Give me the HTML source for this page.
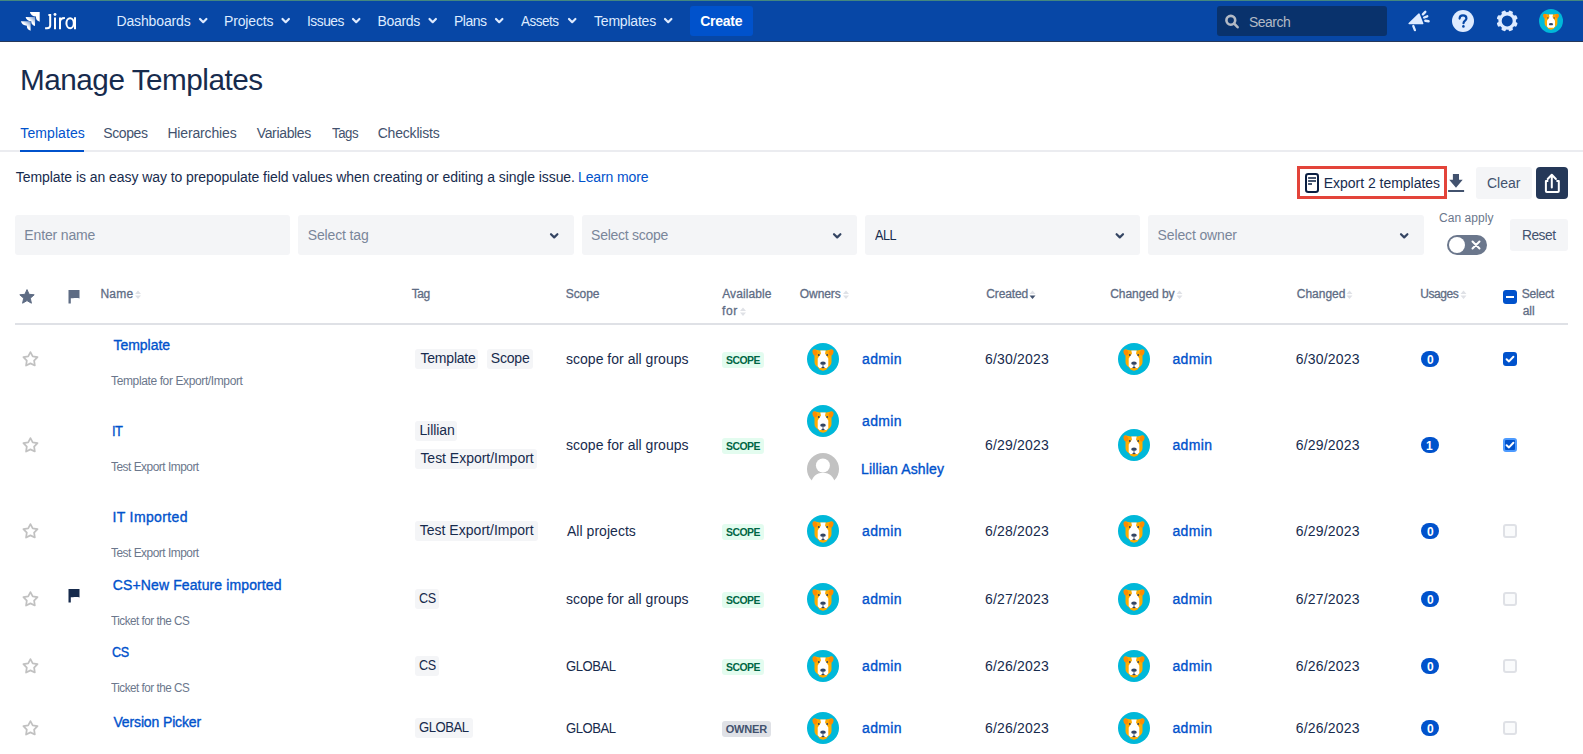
<!DOCTYPE html>
<html><head><meta charset="utf-8">
<style>
html,body{margin:0;padding:0;background:#fff;width:1583px;height:754px;overflow:hidden;position:relative;font-family:"Liberation Sans",sans-serif}
.t{position:absolute;white-space:nowrap;font-family:"Liberation Sans",sans-serif}
.a{position:absolute}
</style></head><body>
<!-- header -->
<div class="a" style="left:0;top:0;width:1583px;height:42px;background:#0747a6"></div>
<div class="a" style="left:0;top:0;width:1583px;height:1px;background:#44877f"></div>
<div class="a" style="left:0;top:41px;width:1583px;height:1px;background:#26385a"></div>
<!-- jira logo -->
<svg class="a" style="left:0;top:0" width="90" height="42" viewBox="0 0 90 42">
 <defs>
  <linearGradient id="jg1" x1="1" y1="0" x2="0.3" y2="0.8"><stop offset="0" stop-color="#fff" stop-opacity="0.35"/><stop offset="0.6" stop-color="#fff"/></linearGradient>
 </defs>
 <path d="M29.9,12.1 L39.7,12.1 L39.7,21.7 C37.6,21.3 36,19.6 36,17.6 L36,16.6 C32.8,16.6 30.4,14.8 29.9,12.1Z" fill="#fff"/>
 <path d="M25.6,17 L35.2,17 L35,26 C33,25.6 31.3,24 31.3,22 L31.3,21.2 C28.3,21.2 26.1,19.6 25.6,17Z" fill="url(#jg1)"/>
 <path d="M20.9,21.3 L30.7,21.3 L30.6,30.8 C28.5,30.3 26.9,28.6 26.9,26.6 L26.9,25.7 C23.8,25.7 21.4,24 20.9,21.3Z" fill="url(#jg1)"/>
 <g fill="none" stroke="#fff" stroke-width="2">
  <path d="M48.4,14.9 H50.2 V25.6 C50.2,27.5 49,28.3 47.1,28.3 H45.1"/>
  <path d="M55,17.5 V29.2"/>
  <path d="M60,17.5 V29.2 M60,22 C60,19.2 61.8,18.1 64.9,18.1"/>
  <ellipse cx="70.1" cy="23.2" rx="3.7" ry="5"/>
  <path d="M75,17.3 V29.2"/>
 </g>
 <circle cx="55" cy="14.5" r="1.45" fill="#fff"/>
</svg>
<!-- nav chevrons -->
<svg class="a" style="left:0;top:0" width="700" height="42">
 <g fill="none" stroke="#deebff" stroke-width="2.2" stroke-linecap="round" stroke-linejoin="round">
  <path d="M200 19 L203.2 22.2 L206.4 19"/>
  <path d="M282.5 19 L285.7 22.2 L288.9 19"/>
  <path d="M353 19 L356.2 22.2 L359.4 19"/>
  <path d="M429.5 19 L432.7 22.2 L435.9 19"/>
  <path d="M496 19 L499.2 22.2 L502.4 19"/>
  <path d="M569 19 L572.2 22.2 L575.4 19"/>
  <path d="M665 19 L668.2 22.2 L671.4 19"/>
 </g>
</svg>
<div class="a" style="left:690px;top:6px;width:63px;height:30px;background:#0052cc;border-radius:3px"></div>
<!-- search -->
<div class="a" style="left:1217px;top:6px;width:170px;height:30px;background:#09326c;border-radius:3px"></div>
<svg class="a" style="left:1222px;top:11.8px" width="20" height="20" viewBox="0 0 20 20">
 <circle cx="8.8" cy="8.3" r="4.4" fill="none" stroke="#b3bac5" stroke-width="2.6"/>
 <path d="M12.2 11.7 L15.6 15.2" stroke="#b3bac5" stroke-width="2.6" stroke-linecap="round"/>
</svg>
<!-- megaphone -->
<svg class="a" style="left:1404px;top:6px" width="30" height="30" viewBox="0 0 30 30">
 <path d="M5.2,17.5 L15,8.2 L18.6,17.5 Z" fill="#deebff" stroke="#deebff" stroke-width="1.6" stroke-linejoin="round"/>
 <path d="M9.3,20 L10.9,24.1" stroke="#deebff" stroke-width="2.3" stroke-linecap="round"/>
 <path d="M18.9,8.3 L21.3,5.8 M20.2,11.5 L23.2,10.3 M21.3,14.8 L24.6,15.3" stroke="#deebff" stroke-width="2.4" stroke-linecap="round"/>
</svg>
<!-- help -->
<svg class="a" style="left:1452px;top:10px" width="22" height="22" viewBox="0 0 22 22">
 <circle cx="11" cy="11" r="11" fill="#deebff"/>
 <path d="M7.6 8.6 C7.6 6.6 9.1 5.3 11 5.3 C13 5.3 14.4 6.6 14.4 8.4 C14.4 10.6 11.5 10.8 11.5 13.2" fill="none" stroke="#0747a6" stroke-width="2.2" stroke-linecap="round"/>
 <circle cx="11.4" cy="16.4" r="1.3" fill="#0747a6"/>
</svg>
<!-- gear -->
<svg class="a" style="left:1496px;top:10px" width="22" height="22" viewBox="0 0 22 22">
 <g fill="#deebff">
  <circle cx="11.2" cy="10.9" r="8.8"/>
  <rect x="9" y="0.3" width="4.4" height="5" rx="1.2" transform="rotate(22.5 11.2 10.9)"/><rect x="9" y="0.3" width="4.4" height="5" rx="1.2" transform="rotate(67.5 11.2 10.9)"/><rect x="9" y="0.3" width="4.4" height="5" rx="1.2" transform="rotate(112.5 11.2 10.9)"/><rect x="9" y="0.3" width="4.4" height="5" rx="1.2" transform="rotate(157.5 11.2 10.9)"/><rect x="9" y="0.3" width="4.4" height="5" rx="1.2" transform="rotate(202.5 11.2 10.9)"/><rect x="9" y="0.3" width="4.4" height="5" rx="1.2" transform="rotate(247.5 11.2 10.9)"/><rect x="9" y="0.3" width="4.4" height="5" rx="1.2" transform="rotate(292.5 11.2 10.9)"/><rect x="9" y="0.3" width="4.4" height="5" rx="1.2" transform="rotate(337.5 11.2 10.9)"/>
 </g>
 <circle cx="11.2" cy="10.9" r="5.5" fill="#0747a6"/>
</svg>
<!-- header avatar -->
<svg class="a" style="left:1539px;top:9px" width="24" height="24" viewBox="0 0 32 32">
<circle cx="16" cy="16" r="16" fill="#00b8d9"/>
<path d="M6,8 C6,6.8 7.5,6.4 9,6.7 L13,7.4 L19,7.4 L23,6.7 C24.5,6.4 26,6.8 26,8 L25.4,11 L24.5,12.5 L24.5,19 C24.5,21 23.3,22.8 21.6,23.8 L19.2,26.8 C17.5,27.6 14.5,27.6 12.8,26.8 L10.4,23.8 C8.7,22.8 7.5,21 7.5,19 L7.5,12.5 L6.6,11Z" fill="#ffab00"/>
<ellipse cx="7.9" cy="9.4" rx="2.3" ry="3" transform="rotate(-20 7.9 9.4)" fill="#ff8b00"/><ellipse cx="24.1" cy="9.4" rx="2.3" ry="3" transform="rotate(20 24.1 9.4)" fill="#ff8b00"/>
<path d="M13.3,7.4 L18.7,7.4 L18,10.6 L21.3,15.6 L21.3,23.3 L19.4,25.2 L12.6,25.2 L10.7,23.3 L10.7,15.6 L14,10.6Z" fill="#fff"/>
<circle cx="11.8" cy="12" r="0.95" fill="#344563"/><circle cx="20.2" cy="12" r="0.95" fill="#344563"/>
<ellipse cx="16" cy="20.2" rx="2.8" ry="1.6" fill="#344563"/>
<path d="M12.6,25 L19.4,25 L17.6,27 C16.6,27.5 15.4,27.5 14.4,27Z" fill="#ffab00"/>
</svg>

<!-- tabs border -->
<div class="a" style="left:0;top:150px;width:1583px;height:2px;background:#ebecf0"></div>
<div class="a" style="left:20px;top:150px;width:64px;height:2px;background:#0052cc"></div>

<!-- export bar -->
<div class="a" style="left:1297px;top:166px;width:144px;height:27px;border:3px solid #e3443a"></div>
<svg class="a" style="left:1304px;top:172px" width="16" height="22" viewBox="0 0 16 22">
 <rect x="2" y="2.1" width="12" height="18" rx="2.3" fill="none" stroke="#091e42" stroke-width="2"/>
 <path d="M4.1,5.9 H12 M4.1,8.9 H12 M4.1,11.9 H8" stroke="#091e42" stroke-width="1.5"/>
</svg>
<svg class="a" style="left:1447px;top:172px" width="18" height="22" viewBox="0 0 18 22">
 <path d="M5.9,2 H12 V7.8 H15.7 L9,15.8 L2.2,7.8 H5.9Z" fill="#42526e"/>
 <rect x="1.1" y="18" width="16" height="2" fill="#42526e"/>
</svg>
<div class="a" style="left:1476px;top:167px;width:56px;height:32px;background:#f4f5f7;border-radius:3px"></div>
<div class="a" style="left:1536px;top:167px;width:32px;height:32px;background:#253858;border-radius:4px"></div>
<svg class="a" style="left:1536px;top:167px" width="32" height="32" viewBox="0 0 32 32">
 <path d="M12.3,14 H9.9 V24.1 C9.9,24.6 10.3,25 10.8,25 H21.9 C22.4,25 22.8,24.6 22.8,24.1 V14 H20.4" fill="none" stroke="#fff" stroke-width="2" stroke-linejoin="round"/>
 <path d="M15.8,20.5 V8 M11.7,12 L15.8,7.8 L19.9,12" fill="none" stroke="#fff" stroke-width="2" stroke-linecap="round" stroke-linejoin="round"/>
</svg>
<!-- filters -->
<div class="a" style="left:15px;top:215px;width:275px;height:40px;background:#f4f5f7;border-radius:3px"></div>
<div class="a" style="left:298px;top:215px;width:276px;height:40px;background:#f4f5f7;border-radius:3px"></div>
<div class="a" style="left:582px;top:215px;width:275px;height:40px;background:#f4f5f7;border-radius:3px"></div>
<div class="a" style="left:865px;top:215px;width:275px;height:40px;background:#f4f5f7;border-radius:3px"></div>
<div class="a" style="left:1148px;top:215px;width:276px;height:40px;background:#f4f5f7;border-radius:3px"></div>
<svg class="a" style="left:0;top:200px" width="1583" height="60">
 <g fill="none" stroke="#344563" stroke-width="2.2" stroke-linecap="round" stroke-linejoin="round">
  <path d="M551 34.2 L554.2 37.4 L557.4 34.2"/>
  <path d="M834 34.2 L837.2 37.4 L840.4 34.2"/>
  <path d="M1116.6 34.2 L1119.8 37.4 L1123 34.2"/>
  <path d="M1401 34.2 L1404.2 37.4 L1407.4 34.2"/>
 </g>
</svg>
<!-- toggle -->
<div class="a" style="left:1447px;top:235px;width:40px;height:20px;background:#6b778c;border-radius:10px"></div>
<div class="a" style="left:1449px;top:237px;width:16px;height:16px;background:#fff;border-radius:8px"></div>
<svg class="a" style="left:1470px;top:239px" width="12" height="12" viewBox="0 0 12 12">
 <path d="M2.5 2.5 L9.5 9.5 M9.5 2.5 L2.5 9.5" stroke="#fff" stroke-width="2" stroke-linecap="round"/>
</svg>
<div class="a" style="left:1510px;top:219px;width:58px;height:32px;background:#f4f5f7;border-radius:3px"></div>

<!-- table header -->
<svg class="a" style="left:18px;top:288px" width="18" height="18" viewBox="0 0 18 18">
 <path d="M9 1.6 L11.1 6.3 L16.2 6.8 L12.3 10.2 L13.4 15.2 L9 12.6 L4.6 15.2 L5.7 10.2 L1.8 6.8 L6.9 6.3Z" fill="#5e6c84" stroke="#5e6c84" stroke-width="1" stroke-linejoin="round"/>
</svg>
<svg class="a" style="left:67.6px;top:289.2px" width="12" height="15" viewBox="0 0 12 15">
 <path d="M0.5 1 L11.5 1 L11.5 9.5 C9 8.5 6 9.5 3.5 9.2 L2.8 9.2 L2.8 14.5 L0.5 14.5Z" fill="#5e6c84"/>
</svg>
<svg class="a" style="left:0;top:280px" width="1583" height="40">
 <g fill="#dfe1e6">
  <path d="M135 14 L138 10.5 L141 14Z M135 15.5 L138 19 L141 15.5Z"/>
  <path d="M740 31 L743 27.5 L746 31Z M740 32.5 L743 36 L746 32.5Z"/>
  <path d="M843 14 L846 10.5 L849 14Z M843 15.5 L846 19 L849 15.5Z"/>
  <path d="M1029.5 14 L1032.5 10.5 L1035.5 14Z"/>
  <path d="M1176.5 14 L1179.5 10.5 L1182.5 14Z M1176.5 15.5 L1179.5 19 L1182.5 15.5Z"/>
  <path d="M1346.5 14 L1349.5 10.5 L1352.5 14Z M1346.5 15.5 L1349.5 19 L1352.5 15.5Z"/>
  <path d="M1460.5 14 L1463.5 10.5 L1466.5 14Z M1460.5 15.5 L1463.5 19 L1466.5 15.5Z"/>
 </g>
 <path d="M1029.5 15.5 L1032.5 19 L1035.5 15.5Z" fill="#42526e"/>
</svg>
<div class="a" style="left:1503px;top:290px;width:14px;height:14px;background:#0052cc;border-radius:3px"></div>
<div class="a" style="left:1506px;top:296px;width:8px;height:2px;background:#fff"></div>
<div class="a" style="left:15px;top:323px;width:1553px;height:2px;background:#dfe1e6"></div>

<div style="position:absolute;left:415px;top:349px;width:63px;height:20px;background:#f4f5f7;border-radius:3px"></div>
<div style="position:absolute;left:487px;top:349px;width:46px;height:20px;background:#f4f5f7;border-radius:3px"></div>
<div style="position:absolute;left:722px;top:352px;width:42px;height:16px;background:#e3fcef;border-radius:3px"></div>
<svg style="position:absolute;left:807px;top:343px" width="32" height="32" viewBox="0 0 32 32"><circle cx="16" cy="16" r="16" fill="#00b8d9"/><path d="M6,8 C6,6.8 7.5,6.4 9,6.7 L13,7.4 L19,7.4 L23,6.7 C24.5,6.4 26,6.8 26,8 L25.4,11 L24.5,12.5 L24.5,19 C24.5,21 23.3,22.8 21.6,23.8 L19.2,26.8 C17.5,27.6 14.5,27.6 12.8,26.8 L10.4,23.8 C8.7,22.8 7.5,21 7.5,19 L7.5,12.5 L6.6,11Z" fill="#ffab00"/><ellipse cx="7.9" cy="9.4" rx="2.3" ry="3" transform="rotate(-20 7.9 9.4)" fill="#ff8b00"/><ellipse cx="24.1" cy="9.4" rx="2.3" ry="3" transform="rotate(20 24.1 9.4)" fill="#ff8b00"/><path d="M13.3,7.4 L18.7,7.4 L18,10.6 L21.3,15.6 L21.3,23.3 L19.4,25.2 L12.6,25.2 L10.7,23.3 L10.7,15.6 L14,10.6Z" fill="#fff"/><circle cx="11.8" cy="12" r="0.95" fill="#344563"/><circle cx="20.2" cy="12" r="0.95" fill="#344563"/><ellipse cx="16" cy="20.2" rx="2.8" ry="1.6" fill="#344563"/><path d="M12.6,25 L19.4,25 L17.6,27 C16.6,27.5 15.4,27.5 14.4,27Z" fill="#ffab00"/><path d="M15.6,21.3 H16.4 V24 H15.6Z" fill="#344563"/><ellipse cx="16" cy="24.5" rx="1.7" ry="0.7" fill="#344563"/></svg>
<svg style="position:absolute;left:1118px;top:343px" width="32" height="32" viewBox="0 0 32 32"><circle cx="16" cy="16" r="16" fill="#00b8d9"/><path d="M6,8 C6,6.8 7.5,6.4 9,6.7 L13,7.4 L19,7.4 L23,6.7 C24.5,6.4 26,6.8 26,8 L25.4,11 L24.5,12.5 L24.5,19 C24.5,21 23.3,22.8 21.6,23.8 L19.2,26.8 C17.5,27.6 14.5,27.6 12.8,26.8 L10.4,23.8 C8.7,22.8 7.5,21 7.5,19 L7.5,12.5 L6.6,11Z" fill="#ffab00"/><ellipse cx="7.9" cy="9.4" rx="2.3" ry="3" transform="rotate(-20 7.9 9.4)" fill="#ff8b00"/><ellipse cx="24.1" cy="9.4" rx="2.3" ry="3" transform="rotate(20 24.1 9.4)" fill="#ff8b00"/><path d="M13.3,7.4 L18.7,7.4 L18,10.6 L21.3,15.6 L21.3,23.3 L19.4,25.2 L12.6,25.2 L10.7,23.3 L10.7,15.6 L14,10.6Z" fill="#fff"/><circle cx="11.8" cy="12" r="0.95" fill="#344563"/><circle cx="20.2" cy="12" r="0.95" fill="#344563"/><ellipse cx="16" cy="20.2" rx="2.8" ry="1.6" fill="#344563"/><path d="M12.6,25 L19.4,25 L17.6,27 C16.6,27.5 15.4,27.5 14.4,27Z" fill="#ffab00"/><path d="M15.6,21.3 H16.4 V24 H15.6Z" fill="#344563"/><ellipse cx="16" cy="24.5" rx="1.7" ry="0.7" fill="#344563"/></svg>
<div style="position:absolute;left:1421px;top:351px;width:18px;height:16px;background:#0052cc;border-radius:8px"></div>
<div style="position:absolute;left:1503px;top:352px;width:10px;height:10px;border:2px solid #0052cc;background:#0052cc;border-radius:3px"></div><svg style="position:absolute;left:1503px;top:352px" width="14" height="14" viewBox="0 0 14 14"><path d="M3.6 7.2 L6 9.4 L10.4 4.8" fill="none" stroke="#fff" stroke-width="2" stroke-linecap="round" stroke-linejoin="round"/></svg>
<svg style="position:absolute;left:21.5px;top:350.2px" width="17" height="17" viewBox="0 0 17 17"><path d="M8.45 2.10 L10.71 6.39 L15.49 7.21 L12.11 10.69 L12.80 15.49 L8.45 13.35 L4.10 15.49 L4.79 10.69 L1.41 7.21 L6.19 6.39Z" fill="none" stroke="#c1c1c1" stroke-width="1.75" stroke-linejoin="round"/></svg>
<div style="position:absolute;left:415px;top:421px;width:42px;height:20px;background:#f4f5f7;border-radius:3px"></div>
<div style="position:absolute;left:415px;top:449px;width:122px;height:20px;background:#f4f5f7;border-radius:3px"></div>
<div style="position:absolute;left:722px;top:438px;width:42px;height:16px;background:#e3fcef;border-radius:3px"></div>
<svg style="position:absolute;left:807px;top:405px" width="32" height="32" viewBox="0 0 32 32"><circle cx="16" cy="16" r="16" fill="#00b8d9"/><path d="M6,8 C6,6.8 7.5,6.4 9,6.7 L13,7.4 L19,7.4 L23,6.7 C24.5,6.4 26,6.8 26,8 L25.4,11 L24.5,12.5 L24.5,19 C24.5,21 23.3,22.8 21.6,23.8 L19.2,26.8 C17.5,27.6 14.5,27.6 12.8,26.8 L10.4,23.8 C8.7,22.8 7.5,21 7.5,19 L7.5,12.5 L6.6,11Z" fill="#ffab00"/><ellipse cx="7.9" cy="9.4" rx="2.3" ry="3" transform="rotate(-20 7.9 9.4)" fill="#ff8b00"/><ellipse cx="24.1" cy="9.4" rx="2.3" ry="3" transform="rotate(20 24.1 9.4)" fill="#ff8b00"/><path d="M13.3,7.4 L18.7,7.4 L18,10.6 L21.3,15.6 L21.3,23.3 L19.4,25.2 L12.6,25.2 L10.7,23.3 L10.7,15.6 L14,10.6Z" fill="#fff"/><circle cx="11.8" cy="12" r="0.95" fill="#344563"/><circle cx="20.2" cy="12" r="0.95" fill="#344563"/><ellipse cx="16" cy="20.2" rx="2.8" ry="1.6" fill="#344563"/><path d="M12.6,25 L19.4,25 L17.6,27 C16.6,27.5 15.4,27.5 14.4,27Z" fill="#ffab00"/><path d="M15.6,21.3 H16.4 V24 H15.6Z" fill="#344563"/><ellipse cx="16" cy="24.5" rx="1.7" ry="0.7" fill="#344563"/></svg>
<svg style="position:absolute;left:807px;top:453px" width="32" height="32" viewBox="0 0 32 32"><circle cx="16" cy="16" r="16" fill="#c2c2c2"/><circle cx="15.9" cy="12.5" r="7" fill="#fff"/><path d="M3.5,33 C4.5,24 9,19.8 16,19.8 C23,19.8 27.5,24 28.5,33Z" fill="#fff"/></svg>
<svg style="position:absolute;left:1118px;top:429px" width="32" height="32" viewBox="0 0 32 32"><circle cx="16" cy="16" r="16" fill="#00b8d9"/><path d="M6,8 C6,6.8 7.5,6.4 9,6.7 L13,7.4 L19,7.4 L23,6.7 C24.5,6.4 26,6.8 26,8 L25.4,11 L24.5,12.5 L24.5,19 C24.5,21 23.3,22.8 21.6,23.8 L19.2,26.8 C17.5,27.6 14.5,27.6 12.8,26.8 L10.4,23.8 C8.7,22.8 7.5,21 7.5,19 L7.5,12.5 L6.6,11Z" fill="#ffab00"/><ellipse cx="7.9" cy="9.4" rx="2.3" ry="3" transform="rotate(-20 7.9 9.4)" fill="#ff8b00"/><ellipse cx="24.1" cy="9.4" rx="2.3" ry="3" transform="rotate(20 24.1 9.4)" fill="#ff8b00"/><path d="M13.3,7.4 L18.7,7.4 L18,10.6 L21.3,15.6 L21.3,23.3 L19.4,25.2 L12.6,25.2 L10.7,23.3 L10.7,15.6 L14,10.6Z" fill="#fff"/><circle cx="11.8" cy="12" r="0.95" fill="#344563"/><circle cx="20.2" cy="12" r="0.95" fill="#344563"/><ellipse cx="16" cy="20.2" rx="2.8" ry="1.6" fill="#344563"/><path d="M12.6,25 L19.4,25 L17.6,27 C16.6,27.5 15.4,27.5 14.4,27Z" fill="#ffab00"/><path d="M15.6,21.3 H16.4 V24 H15.6Z" fill="#344563"/><ellipse cx="16" cy="24.5" rx="1.7" ry="0.7" fill="#344563"/></svg>
<div style="position:absolute;left:1421px;top:437px;width:18px;height:16px;background:#0052cc;border-radius:8px"></div>
<div style="position:absolute;left:1503px;top:438px;width:10px;height:10px;border:2px solid #4c9aff;background:#0052cc;border-radius:3px"></div><svg style="position:absolute;left:1503px;top:438px" width="14" height="14" viewBox="0 0 14 14"><path d="M3.6 7.2 L6 9.4 L10.4 4.8" fill="none" stroke="#fff" stroke-width="2" stroke-linecap="round" stroke-linejoin="round"/></svg>
<svg style="position:absolute;left:21.5px;top:436.2px" width="17" height="17" viewBox="0 0 17 17"><path d="M8.45 2.10 L10.71 6.39 L15.49 7.21 L12.11 10.69 L12.80 15.49 L8.45 13.35 L4.10 15.49 L4.79 10.69 L1.41 7.21 L6.19 6.39Z" fill="none" stroke="#c1c1c1" stroke-width="1.75" stroke-linejoin="round"/></svg>
<div style="position:absolute;left:415px;top:521px;width:123px;height:20px;background:#f4f5f7;border-radius:3px"></div>
<div style="position:absolute;left:722px;top:524px;width:42px;height:16px;background:#e3fcef;border-radius:3px"></div>
<svg style="position:absolute;left:807px;top:515px" width="32" height="32" viewBox="0 0 32 32"><circle cx="16" cy="16" r="16" fill="#00b8d9"/><path d="M6,8 C6,6.8 7.5,6.4 9,6.7 L13,7.4 L19,7.4 L23,6.7 C24.5,6.4 26,6.8 26,8 L25.4,11 L24.5,12.5 L24.5,19 C24.5,21 23.3,22.8 21.6,23.8 L19.2,26.8 C17.5,27.6 14.5,27.6 12.8,26.8 L10.4,23.8 C8.7,22.8 7.5,21 7.5,19 L7.5,12.5 L6.6,11Z" fill="#ffab00"/><ellipse cx="7.9" cy="9.4" rx="2.3" ry="3" transform="rotate(-20 7.9 9.4)" fill="#ff8b00"/><ellipse cx="24.1" cy="9.4" rx="2.3" ry="3" transform="rotate(20 24.1 9.4)" fill="#ff8b00"/><path d="M13.3,7.4 L18.7,7.4 L18,10.6 L21.3,15.6 L21.3,23.3 L19.4,25.2 L12.6,25.2 L10.7,23.3 L10.7,15.6 L14,10.6Z" fill="#fff"/><circle cx="11.8" cy="12" r="0.95" fill="#344563"/><circle cx="20.2" cy="12" r="0.95" fill="#344563"/><ellipse cx="16" cy="20.2" rx="2.8" ry="1.6" fill="#344563"/><path d="M12.6,25 L19.4,25 L17.6,27 C16.6,27.5 15.4,27.5 14.4,27Z" fill="#ffab00"/><path d="M15.6,21.3 H16.4 V24 H15.6Z" fill="#344563"/><ellipse cx="16" cy="24.5" rx="1.7" ry="0.7" fill="#344563"/></svg>
<svg style="position:absolute;left:1118px;top:515px" width="32" height="32" viewBox="0 0 32 32"><circle cx="16" cy="16" r="16" fill="#00b8d9"/><path d="M6,8 C6,6.8 7.5,6.4 9,6.7 L13,7.4 L19,7.4 L23,6.7 C24.5,6.4 26,6.8 26,8 L25.4,11 L24.5,12.5 L24.5,19 C24.5,21 23.3,22.8 21.6,23.8 L19.2,26.8 C17.5,27.6 14.5,27.6 12.8,26.8 L10.4,23.8 C8.7,22.8 7.5,21 7.5,19 L7.5,12.5 L6.6,11Z" fill="#ffab00"/><ellipse cx="7.9" cy="9.4" rx="2.3" ry="3" transform="rotate(-20 7.9 9.4)" fill="#ff8b00"/><ellipse cx="24.1" cy="9.4" rx="2.3" ry="3" transform="rotate(20 24.1 9.4)" fill="#ff8b00"/><path d="M13.3,7.4 L18.7,7.4 L18,10.6 L21.3,15.6 L21.3,23.3 L19.4,25.2 L12.6,25.2 L10.7,23.3 L10.7,15.6 L14,10.6Z" fill="#fff"/><circle cx="11.8" cy="12" r="0.95" fill="#344563"/><circle cx="20.2" cy="12" r="0.95" fill="#344563"/><ellipse cx="16" cy="20.2" rx="2.8" ry="1.6" fill="#344563"/><path d="M12.6,25 L19.4,25 L17.6,27 C16.6,27.5 15.4,27.5 14.4,27Z" fill="#ffab00"/><path d="M15.6,21.3 H16.4 V24 H15.6Z" fill="#344563"/><ellipse cx="16" cy="24.5" rx="1.7" ry="0.7" fill="#344563"/></svg>
<div style="position:absolute;left:1421px;top:523px;width:18px;height:16px;background:#0052cc;border-radius:8px"></div>
<div style="position:absolute;left:1503px;top:524px;width:10px;height:10px;border:2px solid #dfe1e6;background:#fafbfc;border-radius:3px"></div>
<svg style="position:absolute;left:21.5px;top:522.2px" width="17" height="17" viewBox="0 0 17 17"><path d="M8.45 2.10 L10.71 6.39 L15.49 7.21 L12.11 10.69 L12.80 15.49 L8.45 13.35 L4.10 15.49 L4.79 10.69 L1.41 7.21 L6.19 6.39Z" fill="none" stroke="#c1c1c1" stroke-width="1.75" stroke-linejoin="round"/></svg>
<div style="position:absolute;left:415px;top:589px;width:24px;height:20px;background:#f4f5f7;border-radius:3px"></div>
<div style="position:absolute;left:722px;top:592px;width:42px;height:16px;background:#e3fcef;border-radius:3px"></div>
<svg style="position:absolute;left:807px;top:583px" width="32" height="32" viewBox="0 0 32 32"><circle cx="16" cy="16" r="16" fill="#00b8d9"/><path d="M6,8 C6,6.8 7.5,6.4 9,6.7 L13,7.4 L19,7.4 L23,6.7 C24.5,6.4 26,6.8 26,8 L25.4,11 L24.5,12.5 L24.5,19 C24.5,21 23.3,22.8 21.6,23.8 L19.2,26.8 C17.5,27.6 14.5,27.6 12.8,26.8 L10.4,23.8 C8.7,22.8 7.5,21 7.5,19 L7.5,12.5 L6.6,11Z" fill="#ffab00"/><ellipse cx="7.9" cy="9.4" rx="2.3" ry="3" transform="rotate(-20 7.9 9.4)" fill="#ff8b00"/><ellipse cx="24.1" cy="9.4" rx="2.3" ry="3" transform="rotate(20 24.1 9.4)" fill="#ff8b00"/><path d="M13.3,7.4 L18.7,7.4 L18,10.6 L21.3,15.6 L21.3,23.3 L19.4,25.2 L12.6,25.2 L10.7,23.3 L10.7,15.6 L14,10.6Z" fill="#fff"/><circle cx="11.8" cy="12" r="0.95" fill="#344563"/><circle cx="20.2" cy="12" r="0.95" fill="#344563"/><ellipse cx="16" cy="20.2" rx="2.8" ry="1.6" fill="#344563"/><path d="M12.6,25 L19.4,25 L17.6,27 C16.6,27.5 15.4,27.5 14.4,27Z" fill="#ffab00"/><path d="M15.6,21.3 H16.4 V24 H15.6Z" fill="#344563"/><ellipse cx="16" cy="24.5" rx="1.7" ry="0.7" fill="#344563"/></svg>
<svg style="position:absolute;left:1118px;top:583px" width="32" height="32" viewBox="0 0 32 32"><circle cx="16" cy="16" r="16" fill="#00b8d9"/><path d="M6,8 C6,6.8 7.5,6.4 9,6.7 L13,7.4 L19,7.4 L23,6.7 C24.5,6.4 26,6.8 26,8 L25.4,11 L24.5,12.5 L24.5,19 C24.5,21 23.3,22.8 21.6,23.8 L19.2,26.8 C17.5,27.6 14.5,27.6 12.8,26.8 L10.4,23.8 C8.7,22.8 7.5,21 7.5,19 L7.5,12.5 L6.6,11Z" fill="#ffab00"/><ellipse cx="7.9" cy="9.4" rx="2.3" ry="3" transform="rotate(-20 7.9 9.4)" fill="#ff8b00"/><ellipse cx="24.1" cy="9.4" rx="2.3" ry="3" transform="rotate(20 24.1 9.4)" fill="#ff8b00"/><path d="M13.3,7.4 L18.7,7.4 L18,10.6 L21.3,15.6 L21.3,23.3 L19.4,25.2 L12.6,25.2 L10.7,23.3 L10.7,15.6 L14,10.6Z" fill="#fff"/><circle cx="11.8" cy="12" r="0.95" fill="#344563"/><circle cx="20.2" cy="12" r="0.95" fill="#344563"/><ellipse cx="16" cy="20.2" rx="2.8" ry="1.6" fill="#344563"/><path d="M12.6,25 L19.4,25 L17.6,27 C16.6,27.5 15.4,27.5 14.4,27Z" fill="#ffab00"/><path d="M15.6,21.3 H16.4 V24 H15.6Z" fill="#344563"/><ellipse cx="16" cy="24.5" rx="1.7" ry="0.7" fill="#344563"/></svg>
<div style="position:absolute;left:1421px;top:591px;width:18px;height:16px;background:#0052cc;border-radius:8px"></div>
<div style="position:absolute;left:1503px;top:592px;width:10px;height:10px;border:2px solid #dfe1e6;background:#fafbfc;border-radius:3px"></div>
<svg style="position:absolute;left:21.5px;top:590.2px" width="17" height="17" viewBox="0 0 17 17"><path d="M8.45 2.10 L10.71 6.39 L15.49 7.21 L12.11 10.69 L12.80 15.49 L8.45 13.35 L4.10 15.49 L4.79 10.69 L1.41 7.21 L6.19 6.39Z" fill="none" stroke="#c1c1c1" stroke-width="1.75" stroke-linejoin="round"/></svg>
<svg style="position:absolute;left:67.6px;top:588.4px" width="12" height="15" viewBox="0 0 12 15"><path d="M0.5 1 L11.5 1 L11.5 9.5 C9 8.5 6 9.5 3.5 9.2 L2.8 9.2 L2.8 14.5 L0.5 14.5Z" fill="#172b4d"/></svg>
<div style="position:absolute;left:415px;top:656px;width:24px;height:20px;background:#f4f5f7;border-radius:3px"></div>
<div style="position:absolute;left:722px;top:659px;width:42px;height:16px;background:#e3fcef;border-radius:3px"></div>
<svg style="position:absolute;left:807px;top:650px" width="32" height="32" viewBox="0 0 32 32"><circle cx="16" cy="16" r="16" fill="#00b8d9"/><path d="M6,8 C6,6.8 7.5,6.4 9,6.7 L13,7.4 L19,7.4 L23,6.7 C24.5,6.4 26,6.8 26,8 L25.4,11 L24.5,12.5 L24.5,19 C24.5,21 23.3,22.8 21.6,23.8 L19.2,26.8 C17.5,27.6 14.5,27.6 12.8,26.8 L10.4,23.8 C8.7,22.8 7.5,21 7.5,19 L7.5,12.5 L6.6,11Z" fill="#ffab00"/><ellipse cx="7.9" cy="9.4" rx="2.3" ry="3" transform="rotate(-20 7.9 9.4)" fill="#ff8b00"/><ellipse cx="24.1" cy="9.4" rx="2.3" ry="3" transform="rotate(20 24.1 9.4)" fill="#ff8b00"/><path d="M13.3,7.4 L18.7,7.4 L18,10.6 L21.3,15.6 L21.3,23.3 L19.4,25.2 L12.6,25.2 L10.7,23.3 L10.7,15.6 L14,10.6Z" fill="#fff"/><circle cx="11.8" cy="12" r="0.95" fill="#344563"/><circle cx="20.2" cy="12" r="0.95" fill="#344563"/><ellipse cx="16" cy="20.2" rx="2.8" ry="1.6" fill="#344563"/><path d="M12.6,25 L19.4,25 L17.6,27 C16.6,27.5 15.4,27.5 14.4,27Z" fill="#ffab00"/><path d="M15.6,21.3 H16.4 V24 H15.6Z" fill="#344563"/><ellipse cx="16" cy="24.5" rx="1.7" ry="0.7" fill="#344563"/></svg>
<svg style="position:absolute;left:1118px;top:650px" width="32" height="32" viewBox="0 0 32 32"><circle cx="16" cy="16" r="16" fill="#00b8d9"/><path d="M6,8 C6,6.8 7.5,6.4 9,6.7 L13,7.4 L19,7.4 L23,6.7 C24.5,6.4 26,6.8 26,8 L25.4,11 L24.5,12.5 L24.5,19 C24.5,21 23.3,22.8 21.6,23.8 L19.2,26.8 C17.5,27.6 14.5,27.6 12.8,26.8 L10.4,23.8 C8.7,22.8 7.5,21 7.5,19 L7.5,12.5 L6.6,11Z" fill="#ffab00"/><ellipse cx="7.9" cy="9.4" rx="2.3" ry="3" transform="rotate(-20 7.9 9.4)" fill="#ff8b00"/><ellipse cx="24.1" cy="9.4" rx="2.3" ry="3" transform="rotate(20 24.1 9.4)" fill="#ff8b00"/><path d="M13.3,7.4 L18.7,7.4 L18,10.6 L21.3,15.6 L21.3,23.3 L19.4,25.2 L12.6,25.2 L10.7,23.3 L10.7,15.6 L14,10.6Z" fill="#fff"/><circle cx="11.8" cy="12" r="0.95" fill="#344563"/><circle cx="20.2" cy="12" r="0.95" fill="#344563"/><ellipse cx="16" cy="20.2" rx="2.8" ry="1.6" fill="#344563"/><path d="M12.6,25 L19.4,25 L17.6,27 C16.6,27.5 15.4,27.5 14.4,27Z" fill="#ffab00"/><path d="M15.6,21.3 H16.4 V24 H15.6Z" fill="#344563"/><ellipse cx="16" cy="24.5" rx="1.7" ry="0.7" fill="#344563"/></svg>
<div style="position:absolute;left:1421px;top:658px;width:18px;height:16px;background:#0052cc;border-radius:8px"></div>
<div style="position:absolute;left:1503px;top:659px;width:10px;height:10px;border:2px solid #dfe1e6;background:#fafbfc;border-radius:3px"></div>
<svg style="position:absolute;left:21.5px;top:657.2px" width="17" height="17" viewBox="0 0 17 17"><path d="M8.45 2.10 L10.71 6.39 L15.49 7.21 L12.11 10.69 L12.80 15.49 L8.45 13.35 L4.10 15.49 L4.79 10.69 L1.41 7.21 L6.19 6.39Z" fill="none" stroke="#c1c1c1" stroke-width="1.75" stroke-linejoin="round"/></svg>
<div style="position:absolute;left:415px;top:718px;width:58px;height:20px;background:#f4f5f7;border-radius:3px"></div>
<div style="position:absolute;left:722px;top:721px;width:49px;height:16px;background:#dfe1e6;border-radius:3px"></div>
<svg style="position:absolute;left:807px;top:712px" width="32" height="32" viewBox="0 0 32 32"><circle cx="16" cy="16" r="16" fill="#00b8d9"/><path d="M6,8 C6,6.8 7.5,6.4 9,6.7 L13,7.4 L19,7.4 L23,6.7 C24.5,6.4 26,6.8 26,8 L25.4,11 L24.5,12.5 L24.5,19 C24.5,21 23.3,22.8 21.6,23.8 L19.2,26.8 C17.5,27.6 14.5,27.6 12.8,26.8 L10.4,23.8 C8.7,22.8 7.5,21 7.5,19 L7.5,12.5 L6.6,11Z" fill="#ffab00"/><ellipse cx="7.9" cy="9.4" rx="2.3" ry="3" transform="rotate(-20 7.9 9.4)" fill="#ff8b00"/><ellipse cx="24.1" cy="9.4" rx="2.3" ry="3" transform="rotate(20 24.1 9.4)" fill="#ff8b00"/><path d="M13.3,7.4 L18.7,7.4 L18,10.6 L21.3,15.6 L21.3,23.3 L19.4,25.2 L12.6,25.2 L10.7,23.3 L10.7,15.6 L14,10.6Z" fill="#fff"/><circle cx="11.8" cy="12" r="0.95" fill="#344563"/><circle cx="20.2" cy="12" r="0.95" fill="#344563"/><ellipse cx="16" cy="20.2" rx="2.8" ry="1.6" fill="#344563"/><path d="M12.6,25 L19.4,25 L17.6,27 C16.6,27.5 15.4,27.5 14.4,27Z" fill="#ffab00"/><path d="M15.6,21.3 H16.4 V24 H15.6Z" fill="#344563"/><ellipse cx="16" cy="24.5" rx="1.7" ry="0.7" fill="#344563"/></svg>
<svg style="position:absolute;left:1118px;top:712px" width="32" height="32" viewBox="0 0 32 32"><circle cx="16" cy="16" r="16" fill="#00b8d9"/><path d="M6,8 C6,6.8 7.5,6.4 9,6.7 L13,7.4 L19,7.4 L23,6.7 C24.5,6.4 26,6.8 26,8 L25.4,11 L24.5,12.5 L24.5,19 C24.5,21 23.3,22.8 21.6,23.8 L19.2,26.8 C17.5,27.6 14.5,27.6 12.8,26.8 L10.4,23.8 C8.7,22.8 7.5,21 7.5,19 L7.5,12.5 L6.6,11Z" fill="#ffab00"/><ellipse cx="7.9" cy="9.4" rx="2.3" ry="3" transform="rotate(-20 7.9 9.4)" fill="#ff8b00"/><ellipse cx="24.1" cy="9.4" rx="2.3" ry="3" transform="rotate(20 24.1 9.4)" fill="#ff8b00"/><path d="M13.3,7.4 L18.7,7.4 L18,10.6 L21.3,15.6 L21.3,23.3 L19.4,25.2 L12.6,25.2 L10.7,23.3 L10.7,15.6 L14,10.6Z" fill="#fff"/><circle cx="11.8" cy="12" r="0.95" fill="#344563"/><circle cx="20.2" cy="12" r="0.95" fill="#344563"/><ellipse cx="16" cy="20.2" rx="2.8" ry="1.6" fill="#344563"/><path d="M12.6,25 L19.4,25 L17.6,27 C16.6,27.5 15.4,27.5 14.4,27Z" fill="#ffab00"/><path d="M15.6,21.3 H16.4 V24 H15.6Z" fill="#344563"/><ellipse cx="16" cy="24.5" rx="1.7" ry="0.7" fill="#344563"/></svg>
<div style="position:absolute;left:1421px;top:720px;width:18px;height:16px;background:#0052cc;border-radius:8px"></div>
<div style="position:absolute;left:1503px;top:721px;width:10px;height:10px;border:2px solid #dfe1e6;background:#fafbfc;border-radius:3px"></div>
<svg style="position:absolute;left:21.5px;top:719.2px" width="17" height="17" viewBox="0 0 17 17"><path d="M8.45 2.10 L10.71 6.39 L15.49 7.21 L12.11 10.69 L12.80 15.49 L8.45 13.35 L4.10 15.49 L4.79 10.69 L1.41 7.21 L6.19 6.39Z" fill="none" stroke="#c1c1c1" stroke-width="1.75" stroke-linejoin="round"/></svg>
<div class="t" style="left:116.40px;top:11.00px;font-size:14px;line-height:20px;font-weight:400;color:#deebff;letter-spacing:-0.122px">Dashboards</div>
<div class="t" style="left:224.00px;top:11.00px;font-size:14px;line-height:20px;font-weight:400;color:#deebff;letter-spacing:-0.143px">Projects</div>
<div class="t" style="left:306.71px;top:11.00px;font-size:14px;line-height:20px;font-weight:400;color:#deebff;letter-spacing:-0.500px;transform:scaleX(0.9863);transform-origin:0 0">Issues</div>
<div class="t" style="left:377.40px;top:11.00px;font-size:14px;line-height:20px;font-weight:400;color:#deebff;letter-spacing:-0.280px">Boards</div>
<div class="t" style="left:454.00px;top:11.00px;font-size:14px;line-height:20px;font-weight:400;color:#deebff;letter-spacing:-0.500px">Plans</div>
<div class="t" style="left:521.00px;top:11.00px;font-size:14px;line-height:20px;font-weight:400;color:#deebff;letter-spacing:-0.500px;transform:scaleX(0.9620);transform-origin:0 0">Assets</div>
<div class="t" style="left:594.00px;top:11.00px;font-size:14px;line-height:20px;font-weight:400;color:#deebff;letter-spacing:-0.200px">Templates</div>
<div class="t" style="left:700.20px;top:11.00px;font-size:14px;line-height:20px;font-weight:700;color:#ffffff;letter-spacing:-0.260px">Create</div>
<div class="t" style="left:1248.60px;top:12.00px;font-size:14px;line-height:20px;font-weight:400;color:#b3bac5;letter-spacing:-0.500px;transform:scaleX(0.9975);transform-origin:0 0">Search</div>
<div class="t" style="left:20.22px;top:59.00px;font-size:30px;line-height:42px;font-weight:400;color:#172b4d;letter-spacing:-0.500px;transform:scaleX(0.9905);transform-origin:0 0">Manage Templates</div>
<div class="t" style="left:20.30px;top:123.00px;font-size:14px;line-height:20px;font-weight:400;color:#0052cc;letter-spacing:0.088px">Templates</div>
<div class="t" style="left:103.30px;top:123.00px;font-size:14px;line-height:20px;font-weight:400;color:#42526e;letter-spacing:-0.420px">Scopes</div>
<div class="t" style="left:167.40px;top:123.00px;font-size:14px;line-height:20px;font-weight:400;color:#42526e;letter-spacing:-0.150px">Hierarchies</div>
<div class="t" style="left:256.70px;top:123.00px;font-size:14px;line-height:20px;font-weight:400;color:#42526e;letter-spacing:-0.337px">Variables</div>
<div class="t" style="left:332.00px;top:123.00px;font-size:14px;line-height:20px;font-weight:400;color:#42526e;letter-spacing:-0.500px;transform:scaleX(0.9455);transform-origin:0 0">Tags</div>
<div class="t" style="left:377.70px;top:123.00px;font-size:14px;line-height:20px;font-weight:400;color:#42526e;letter-spacing:-0.189px">Checklists</div>
<div class="t" style="left:15.80px;top:167.00px;font-size:14px;line-height:20px;font-weight:400;color:#172b4d;letter-spacing:-0.064px">Template is an easy way to prepopulate field values when creating or editing a single issue.</div>
<div class="t" style="left:578.00px;top:167.00px;font-size:14px;line-height:20px;font-weight:400;color:#0052cc;letter-spacing:-0.111px">Learn more</div>
<div class="t" style="left:1323.80px;top:173.00px;font-size:14px;line-height:20px;font-weight:400;color:#172b4d;letter-spacing:-0.029px">Export 2 templates</div>
<div class="t" style="left:1487.00px;top:173.00px;font-size:14px;line-height:20px;font-weight:400;color:#42526e;letter-spacing:0.000px">Clear</div>
<div class="t" style="left:24.30px;top:225.00px;font-size:14px;line-height:20px;font-weight:400;color:#7a869a;letter-spacing:-0.144px">Enter name</div>
<div class="t" style="left:307.70px;top:225.00px;font-size:14px;line-height:20px;font-weight:400;color:#7a869a;letter-spacing:-0.133px">Select tag</div>
<div class="t" style="left:591.10px;top:225.00px;font-size:14px;line-height:20px;font-weight:400;color:#7a869a;letter-spacing:-0.273px">Select scope</div>
<div class="t" style="left:875.30px;top:225.00px;font-size:14px;line-height:20px;font-weight:400;color:#172b4d;letter-spacing:-0.500px;transform:scaleX(0.9042);transform-origin:0 0">ALL</div>
<div class="t" style="left:1157.60px;top:225.00px;font-size:14px;line-height:20px;font-weight:400;color:#7a869a;letter-spacing:-0.136px">Select owner</div>
<div class="t" style="left:1439.00px;top:210.00px;font-size:12px;line-height:17px;font-weight:400;color:#6b778c;letter-spacing:0.062px">Can apply</div>
<div class="t" style="left:1521.62px;top:225.00px;font-size:14px;line-height:20px;font-weight:400;color:#42526e;letter-spacing:-0.500px;transform:scaleX(0.9824);transform-origin:0 0">Reset</div>
<div class="t" style="left:100.40px;top:286.00px;font-size:12px;line-height:17px;font-weight:400;color:#5e6c84;letter-spacing:0.267px;-webkit-text-stroke:0.28px #5e6c84">Name</div>
<div class="t" style="left:411.80px;top:286.00px;font-size:12px;line-height:17px;font-weight:400;color:#5e6c84;letter-spacing:-0.450px;-webkit-text-stroke:0.28px #5e6c84">Tag</div>
<div class="t" style="left:565.80px;top:286.00px;font-size:12px;line-height:17px;font-weight:400;color:#5e6c84;letter-spacing:-0.100px;-webkit-text-stroke:0.28px #5e6c84">Scope</div>
<div class="t" style="left:722.20px;top:286.00px;font-size:12px;line-height:17px;font-weight:400;color:#5e6c84;letter-spacing:0.100px;-webkit-text-stroke:0.28px #5e6c84">Available</div>
<div class="t" style="left:722.20px;top:303.00px;font-size:12px;line-height:17px;font-weight:400;color:#5e6c84;letter-spacing:0.600px;-webkit-text-stroke:0.28px #5e6c84;transform:scaleX(1.0066);transform-origin:0 0">for</div>
<div class="t" style="left:799.80px;top:286.00px;font-size:12px;line-height:17px;font-weight:400;color:#5e6c84;letter-spacing:-0.080px;-webkit-text-stroke:0.28px #5e6c84">Owners</div>
<div class="t" style="left:986.30px;top:286.00px;font-size:12px;line-height:17px;font-weight:400;color:#5e6c84;letter-spacing:-0.150px;-webkit-text-stroke:0.28px #5e6c84">Created</div>
<div class="t" style="left:1110.20px;top:286.00px;font-size:12px;line-height:17px;font-weight:400;color:#5e6c84;letter-spacing:-0.033px;-webkit-text-stroke:0.28px #5e6c84">Changed by</div>
<div class="t" style="left:1296.80px;top:286.00px;font-size:12px;line-height:17px;font-weight:400;color:#5e6c84;letter-spacing:-0.017px;-webkit-text-stroke:0.28px #5e6c84">Changed</div>
<div class="t" style="left:1420.30px;top:286.00px;font-size:12px;line-height:17px;font-weight:400;color:#5e6c84;letter-spacing:-0.460px;-webkit-text-stroke:0.28px #5e6c84">Usages</div>
<div class="t" style="left:1521.70px;top:286.00px;font-size:12px;line-height:17px;font-weight:400;color:#5e6c84;letter-spacing:-0.200px;-webkit-text-stroke:0.28px #5e6c84">Select</div>
<div class="t" style="left:1522.70px;top:303.00px;font-size:12px;line-height:17px;font-weight:400;color:#5e6c84;letter-spacing:-0.050px;-webkit-text-stroke:0.28px #5e6c84">all</div>
<div class="t" style="left:113.40px;top:335.00px;font-size:14px;line-height:20px;font-weight:400;color:#0052cc;letter-spacing:-0.014px;-webkit-text-stroke:0.35px #0052cc">Template</div>
<div class="t" style="left:111.10px;top:373.00px;font-size:12px;line-height:17px;font-weight:400;color:#6b778c;letter-spacing:-0.384px">Template for Export/Import</div>
<div class="t" style="left:420.50px;top:348.00px;font-size:14px;line-height:20px;font-weight:400;color:#172b4d;letter-spacing:-0.214px">Template</div>
<div class="t" style="left:490.80px;top:348.00px;font-size:14px;line-height:20px;font-weight:400;color:#172b4d;letter-spacing:-0.200px">Scope</div>
<div class="t" style="left:566.00px;top:349.00px;font-size:14px;line-height:20px;font-weight:400;color:#172b4d;letter-spacing:0.016px">scope for all groups</div>
<div class="t" style="left:725.70px;top:353.00px;font-size:11px;line-height:15px;font-weight:700;color:#006644;letter-spacing:-0.500px;transform:scaleX(0.9444);transform-origin:0 0">SCOPE</div>
<div class="t" style="left:862.00px;top:349.00px;font-size:14px;line-height:20px;font-weight:400;color:#0052cc;letter-spacing:0.350px;-webkit-text-stroke:0.35px #0052cc">admin</div>
<div class="t" style="left:985.00px;top:349.00px;font-size:14px;line-height:20px;font-weight:400;color:#172b4d;letter-spacing:0.175px">6/30/2023</div>
<div class="t" style="left:1172.40px;top:349.00px;font-size:14px;line-height:20px;font-weight:400;color:#0052cc;letter-spacing:0.375px;-webkit-text-stroke:0.35px #0052cc">admin</div>
<div class="t" style="left:1295.80px;top:349.00px;font-size:14px;line-height:20px;font-weight:400;color:#172b4d;letter-spacing:0.175px">6/30/2023</div>
<div class="t" style="left:1427.00px;top:352.00px;font-size:12px;line-height:17px;font-weight:700;color:#ffffff;letter-spacing:0.000px">0</div>
<div class="t" style="left:112.48px;top:421.00px;font-size:14px;line-height:20px;font-weight:400;color:#0052cc;letter-spacing:-0.500px;-webkit-text-stroke:0.35px #0052cc;transform:scaleX(0.9217);transform-origin:0 0">IT</div>
<div class="t" style="left:111.10px;top:459.00px;font-size:12px;line-height:17px;font-weight:400;color:#6b778c;letter-spacing:-0.500px;transform:scaleX(0.9921);transform-origin:0 0">Test Export Import</div>
<div class="t" style="left:419.40px;top:420.00px;font-size:14px;line-height:20px;font-weight:400;color:#172b4d;letter-spacing:-0.067px">Lillian</div>
<div class="t" style="left:420.40px;top:448.00px;font-size:14px;line-height:20px;font-weight:400;color:#172b4d;letter-spacing:-0.018px">Test Export/Import</div>
<div class="t" style="left:566.00px;top:435.00px;font-size:14px;line-height:20px;font-weight:400;color:#172b4d;letter-spacing:0.016px">scope for all groups</div>
<div class="t" style="left:725.70px;top:439.00px;font-size:11px;line-height:15px;font-weight:700;color:#006644;letter-spacing:-0.500px;transform:scaleX(0.9444);transform-origin:0 0">SCOPE</div>
<div class="t" style="left:862.00px;top:411.00px;font-size:14px;line-height:20px;font-weight:400;color:#0052cc;letter-spacing:0.350px;-webkit-text-stroke:0.35px #0052cc">admin</div>
<div class="t" style="left:861.00px;top:459.00px;font-size:14px;line-height:20px;font-weight:400;color:#0052cc;letter-spacing:0.154px;-webkit-text-stroke:0.35px #0052cc">Lillian Ashley</div>
<div class="t" style="left:985.00px;top:435.00px;font-size:14px;line-height:20px;font-weight:400;color:#172b4d;letter-spacing:0.175px">6/29/2023</div>
<div class="t" style="left:1172.40px;top:435.00px;font-size:14px;line-height:20px;font-weight:400;color:#0052cc;letter-spacing:0.375px;-webkit-text-stroke:0.35px #0052cc">admin</div>
<div class="t" style="left:1295.80px;top:435.00px;font-size:14px;line-height:20px;font-weight:400;color:#172b4d;letter-spacing:0.175px">6/29/2023</div>
<div class="t" style="left:1426.00px;top:438.00px;font-size:12px;line-height:17px;font-weight:700;color:#ffffff;letter-spacing:0.000px">1</div>
<div class="t" style="left:112.40px;top:507.00px;font-size:14px;line-height:20px;font-weight:400;color:#0052cc;letter-spacing:0.380px;-webkit-text-stroke:0.35px #0052cc">IT Imported</div>
<div class="t" style="left:111.10px;top:545.00px;font-size:12px;line-height:17px;font-weight:400;color:#6b778c;letter-spacing:-0.500px;transform:scaleX(0.9921);transform-origin:0 0">Test Export Import</div>
<div class="t" style="left:419.70px;top:520.00px;font-size:14px;line-height:20px;font-weight:400;color:#172b4d;letter-spacing:0.024px">Test Export/Import</div>
<div class="t" style="left:567.00px;top:521.00px;font-size:14px;line-height:20px;font-weight:400;color:#172b4d;letter-spacing:0.036px">All projects</div>
<div class="t" style="left:725.70px;top:525.00px;font-size:11px;line-height:15px;font-weight:700;color:#006644;letter-spacing:-0.500px;transform:scaleX(0.9444);transform-origin:0 0">SCOPE</div>
<div class="t" style="left:862.00px;top:521.00px;font-size:14px;line-height:20px;font-weight:400;color:#0052cc;letter-spacing:0.350px;-webkit-text-stroke:0.35px #0052cc">admin</div>
<div class="t" style="left:985.00px;top:521.00px;font-size:14px;line-height:20px;font-weight:400;color:#172b4d;letter-spacing:0.175px">6/28/2023</div>
<div class="t" style="left:1172.40px;top:521.00px;font-size:14px;line-height:20px;font-weight:400;color:#0052cc;letter-spacing:0.375px;-webkit-text-stroke:0.35px #0052cc">admin</div>
<div class="t" style="left:1295.80px;top:521.00px;font-size:14px;line-height:20px;font-weight:400;color:#172b4d;letter-spacing:0.175px">6/29/2023</div>
<div class="t" style="left:1427.00px;top:524.00px;font-size:12px;line-height:17px;font-weight:700;color:#ffffff;letter-spacing:0.000px">0</div>
<div class="t" style="left:112.80px;top:575.00px;font-size:14px;line-height:20px;font-weight:400;color:#0052cc;letter-spacing:0.118px;-webkit-text-stroke:0.35px #0052cc">CS+New Feature imported</div>
<div class="t" style="left:111.10px;top:613.00px;font-size:12px;line-height:17px;font-weight:400;color:#6b778c;letter-spacing:-0.500px;transform:scaleX(0.9741);transform-origin:0 0">Ticket for the CS</div>
<div class="t" style="left:418.58px;top:588.00px;font-size:14px;line-height:20px;font-weight:400;color:#172b4d;letter-spacing:-0.500px;transform:scaleX(0.9000);transform-origin:0 0">CS</div>
<div class="t" style="left:566.00px;top:589.00px;font-size:14px;line-height:20px;font-weight:400;color:#172b4d;letter-spacing:0.016px">scope for all groups</div>
<div class="t" style="left:725.70px;top:593.00px;font-size:11px;line-height:15px;font-weight:700;color:#006644;letter-spacing:-0.500px;transform:scaleX(0.9444);transform-origin:0 0">SCOPE</div>
<div class="t" style="left:862.00px;top:589.00px;font-size:14px;line-height:20px;font-weight:400;color:#0052cc;letter-spacing:0.350px;-webkit-text-stroke:0.35px #0052cc">admin</div>
<div class="t" style="left:985.00px;top:589.00px;font-size:14px;line-height:20px;font-weight:400;color:#172b4d;letter-spacing:0.175px">6/27/2023</div>
<div class="t" style="left:1172.40px;top:589.00px;font-size:14px;line-height:20px;font-weight:400;color:#0052cc;letter-spacing:0.375px;-webkit-text-stroke:0.35px #0052cc">admin</div>
<div class="t" style="left:1295.80px;top:589.00px;font-size:14px;line-height:20px;font-weight:400;color:#172b4d;letter-spacing:0.175px">6/27/2023</div>
<div class="t" style="left:1427.00px;top:592.00px;font-size:12px;line-height:17px;font-weight:700;color:#ffffff;letter-spacing:0.000px">0</div>
<div class="t" style="left:112.23px;top:642.00px;font-size:14px;line-height:20px;font-weight:400;color:#0052cc;letter-spacing:-0.500px;-webkit-text-stroke:0.35px #0052cc;transform:scaleX(0.9000);transform-origin:0 0">CS</div>
<div class="t" style="left:111.10px;top:680.00px;font-size:12px;line-height:17px;font-weight:400;color:#6b778c;letter-spacing:-0.500px;transform:scaleX(0.9741);transform-origin:0 0">Ticket for the CS</div>
<div class="t" style="left:418.58px;top:655.00px;font-size:14px;line-height:20px;font-weight:400;color:#172b4d;letter-spacing:-0.500px;transform:scaleX(0.9000);transform-origin:0 0">CS</div>
<div class="t" style="left:566.07px;top:656.00px;font-size:14px;line-height:20px;font-weight:400;color:#172b4d;letter-spacing:-0.500px;transform:scaleX(0.9333);transform-origin:0 0">GLOBAL</div>
<div class="t" style="left:725.70px;top:660.00px;font-size:11px;line-height:15px;font-weight:700;color:#006644;letter-spacing:-0.500px;transform:scaleX(0.9444);transform-origin:0 0">SCOPE</div>
<div class="t" style="left:862.00px;top:656.00px;font-size:14px;line-height:20px;font-weight:400;color:#0052cc;letter-spacing:0.350px;-webkit-text-stroke:0.35px #0052cc">admin</div>
<div class="t" style="left:985.00px;top:656.00px;font-size:14px;line-height:20px;font-weight:400;color:#172b4d;letter-spacing:0.175px">6/26/2023</div>
<div class="t" style="left:1172.40px;top:656.00px;font-size:14px;line-height:20px;font-weight:400;color:#0052cc;letter-spacing:0.375px;-webkit-text-stroke:0.35px #0052cc">admin</div>
<div class="t" style="left:1295.80px;top:656.00px;font-size:14px;line-height:20px;font-weight:400;color:#172b4d;letter-spacing:0.175px">6/26/2023</div>
<div class="t" style="left:1427.00px;top:659.00px;font-size:12px;line-height:17px;font-weight:700;color:#ffffff;letter-spacing:0.000px">0</div>
<div class="t" style="left:113.40px;top:712.00px;font-size:14px;line-height:20px;font-weight:400;color:#0052cc;letter-spacing:-0.131px;-webkit-text-stroke:0.35px #0052cc">Version Picker</div>
<div class="t" style="left:419.16px;top:717.00px;font-size:14px;line-height:20px;font-weight:400;color:#172b4d;letter-spacing:-0.500px;transform:scaleX(0.9352);transform-origin:0 0">GLOBAL</div>
<div class="t" style="left:566.07px;top:718.00px;font-size:14px;line-height:20px;font-weight:400;color:#172b4d;letter-spacing:-0.500px;transform:scaleX(0.9333);transform-origin:0 0">GLOBAL</div>
<div class="t" style="left:725.70px;top:722.00px;font-size:11px;line-height:15px;font-weight:700;color:#42526e;letter-spacing:-0.175px">OWNER</div>
<div class="t" style="left:862.00px;top:718.00px;font-size:14px;line-height:20px;font-weight:400;color:#0052cc;letter-spacing:0.350px;-webkit-text-stroke:0.35px #0052cc">admin</div>
<div class="t" style="left:985.00px;top:718.00px;font-size:14px;line-height:20px;font-weight:400;color:#172b4d;letter-spacing:0.175px">6/26/2023</div>
<div class="t" style="left:1172.40px;top:718.00px;font-size:14px;line-height:20px;font-weight:400;color:#0052cc;letter-spacing:0.375px;-webkit-text-stroke:0.35px #0052cc">admin</div>
<div class="t" style="left:1295.80px;top:718.00px;font-size:14px;line-height:20px;font-weight:400;color:#172b4d;letter-spacing:0.175px">6/26/2023</div>
<div class="t" style="left:1427.00px;top:721.00px;font-size:12px;line-height:17px;font-weight:700;color:#ffffff;letter-spacing:0.000px">0</div>
</body></html>
